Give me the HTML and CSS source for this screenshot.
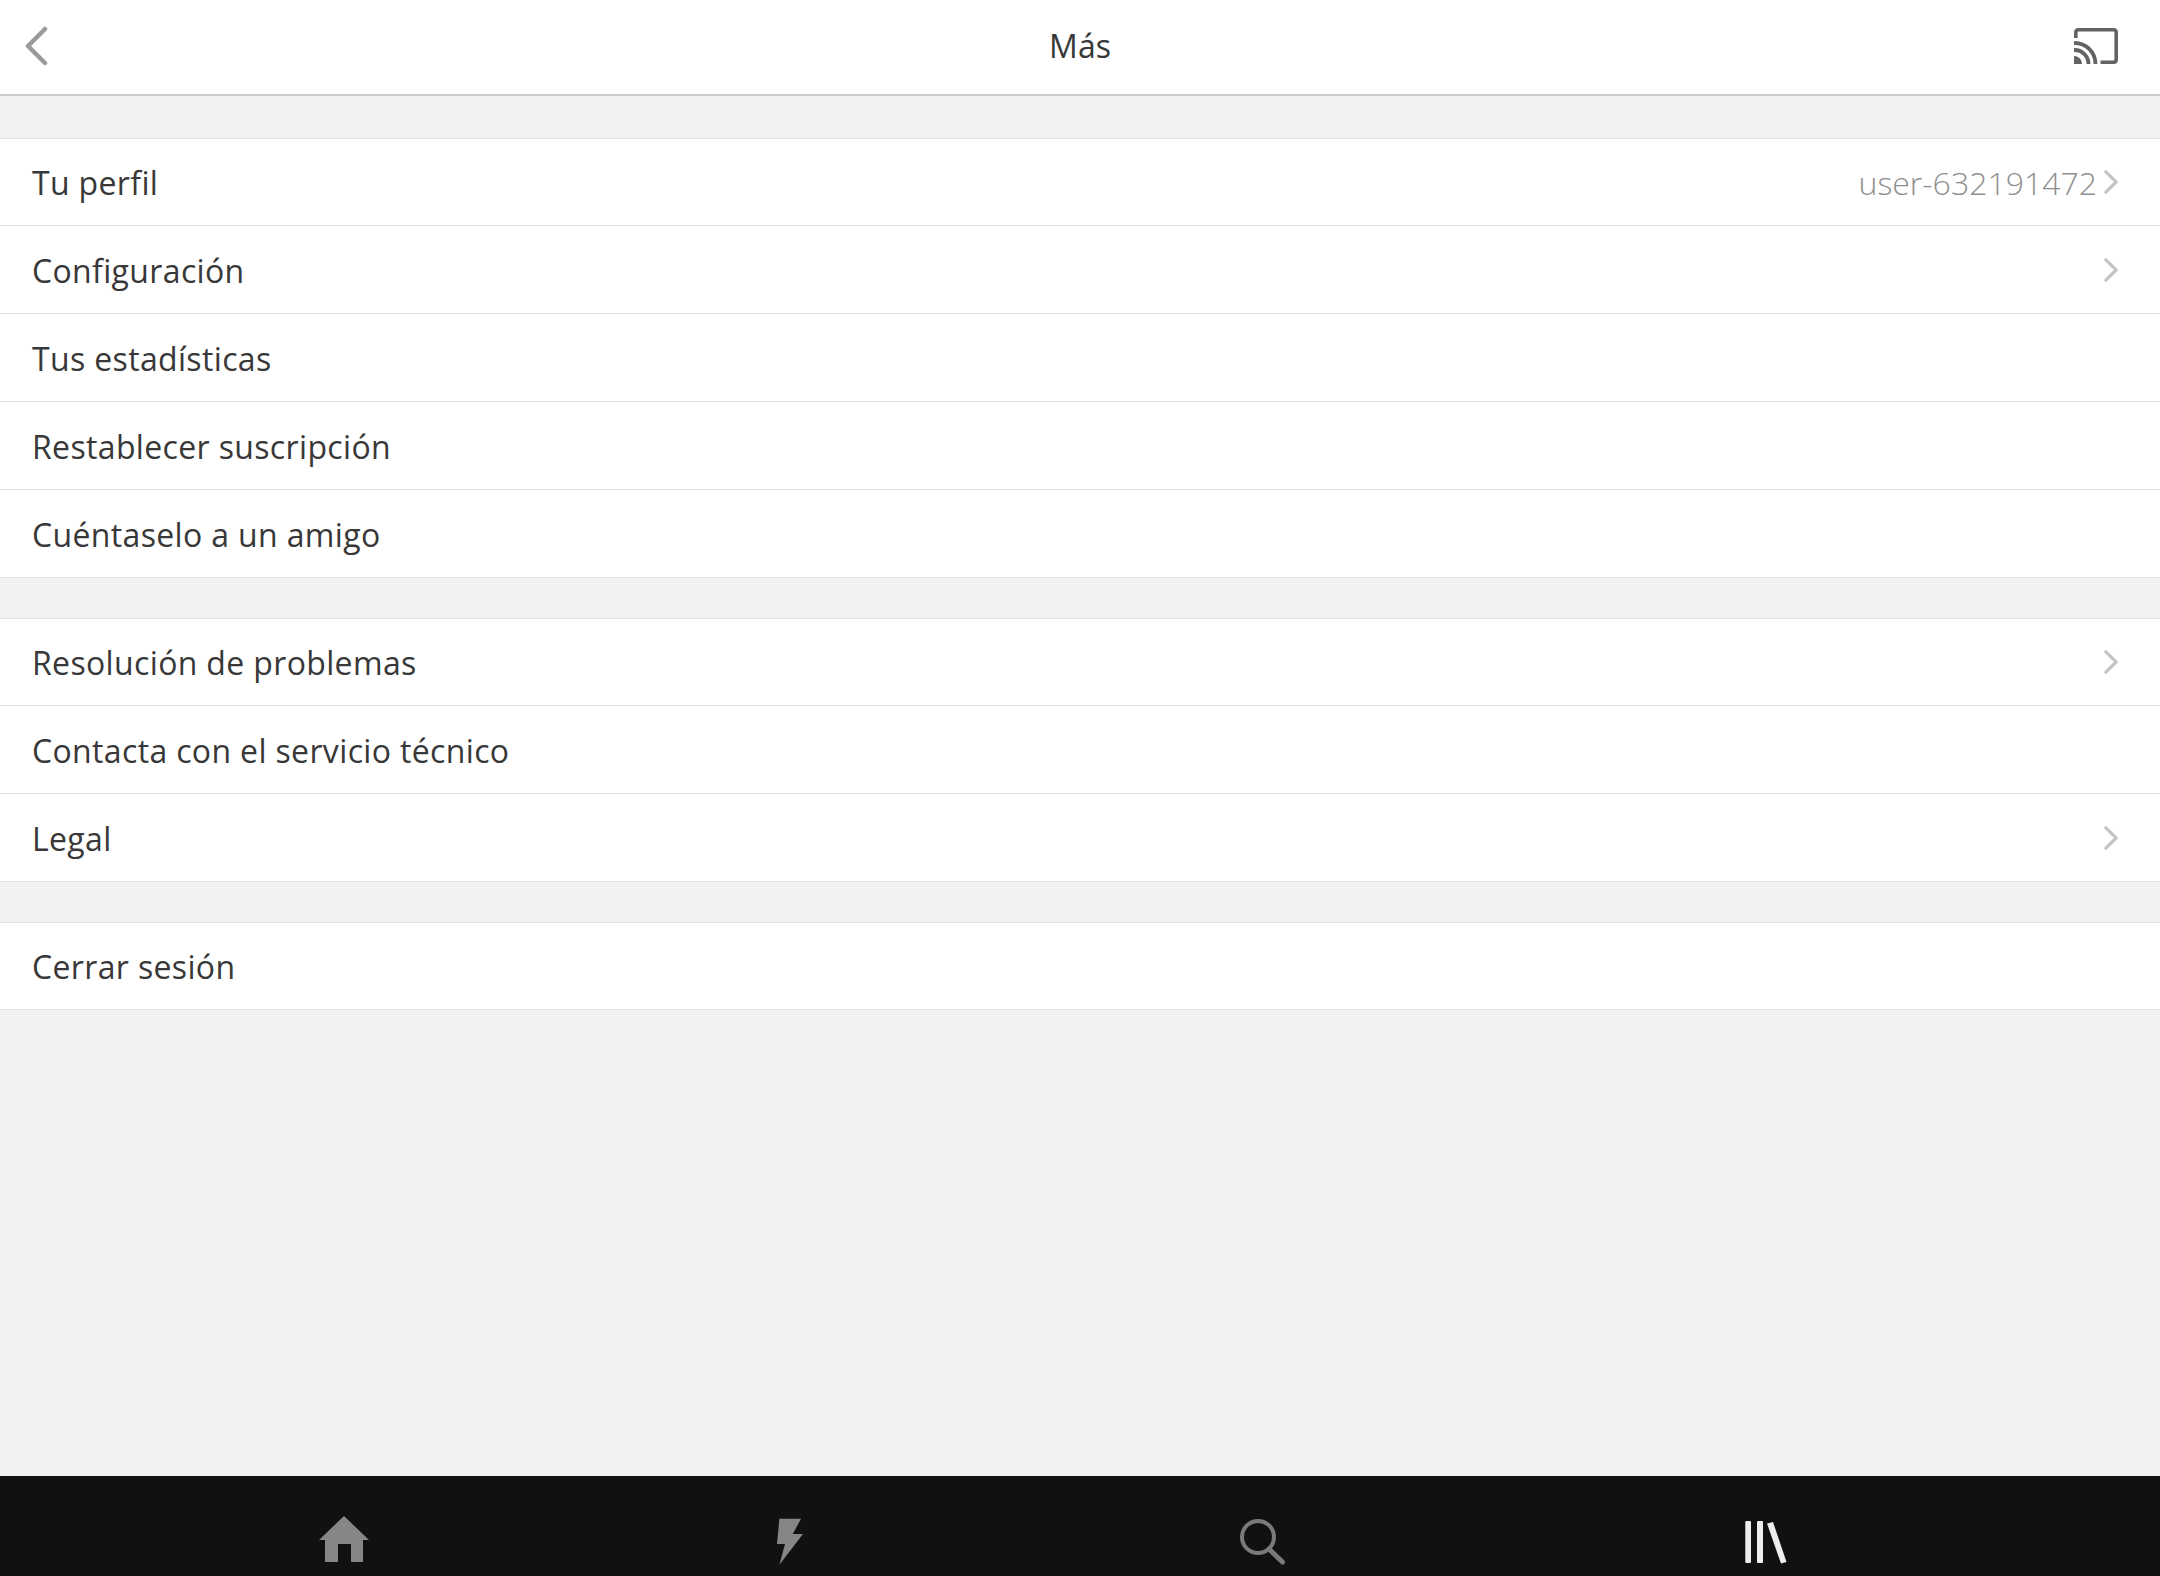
FILE: index.html
```html
<!DOCTYPE html>
<html lang="es">
<head>
<meta charset="utf-8">
<title>Más</title>
<link rel="stylesheet" href="styles.css">
</head>
<body>
<div class="app">
  <header class="topbar">
    <svg class="back" viewBox="0 0 24 40" width="24" height="40"><path d="M21 3 L4 20 L21 37" fill="none" stroke="#9b9b9b" stroke-width="4.5" stroke-linecap="round" stroke-linejoin="round"/></svg>
    <h1 class="title">Más</h1>
    <svg class="cast" viewBox="0 0 44 36" width="44" height="36"><path d="M1.8 10 V4.500 Q1.8 1.800 4.500 1.800 H39.500 Q42.200 1.800 42.200 4.500 V31.500 Q42.200 34.200 39.500 34.200 H26.500" fill="none" stroke="#636363" stroke-width="3.6"/><path d="M0 15 A21 21 0 0 1 21.500 36" fill="none" stroke="#636363" stroke-width="3.8"/><path d="M0 22 A14 14 0 0 1 14.500 36" fill="none" stroke="#636363" stroke-width="3.8"/><path d="M0 28 A8 8 0 0 1 8 36 H0 Z" fill="#636363"/></svg>
  </header>
  <main class="content">
    <section class="group">
      <div class="row"><span class="label">Tu perfil</span><span class="value">user-632191472</span><svg class="chev" viewBox="0 0 14 24" width="14" height="24"><path d="M1.800 1.800 L12.200 12 L1.800 22.200" fill="none" stroke="#c4c4c4" stroke-width="3.2" stroke-linecap="round" stroke-linejoin="round"/></svg></div>
      <div class="row"><span class="label">Configuración</span><svg class="chev" viewBox="0 0 14 24" width="14" height="24"><path d="M1.800 1.800 L12.200 12 L1.800 22.200" fill="none" stroke="#c4c4c4" stroke-width="3.2" stroke-linecap="round" stroke-linejoin="round"/></svg></div>
      <div class="row"><span class="label">Tus estadísticas</span></div>
      <div class="row"><span class="label">Restablecer suscripción</span></div>
      <div class="row"><span class="label">Cuéntaselo a un amigo</span></div>
    </section>
    <section class="group">
      <div class="row"><span class="label">Resolución de problemas</span><svg class="chev" viewBox="0 0 14 24" width="14" height="24"><path d="M1.800 1.800 L12.200 12 L1.800 22.200" fill="none" stroke="#c4c4c4" stroke-width="3.2" stroke-linecap="round" stroke-linejoin="round"/></svg></div>
      <div class="row"><span class="label">Contacta con el servicio técnico</span></div>
      <div class="row"><span class="label">Legal</span><svg class="chev" viewBox="0 0 14 24" width="14" height="24"><path d="M1.800 1.800 L12.200 12 L1.800 22.200" fill="none" stroke="#c4c4c4" stroke-width="3.2" stroke-linecap="round" stroke-linejoin="round"/></svg></div>
    </section>
    <section class="group">
      <div class="row"><span class="label">Cerrar sesión</span></div>
    </section>
  </main>
  <nav class="tabbar">
    <svg viewBox="0 0 50 50" width="50" height="50"><path d="M25 0 L50 24 H44 V46 H32 V28 H19 V46 H6 V24 H0 Z" fill="#868686"/></svg>
    <svg viewBox="0 0 50 50" width="50" height="50"><path d="M16.400 2.700 H38 L29.800 18 H40 L16.400 48.700 L22 28 H14 Z" fill="#868686"/></svg>
    <svg viewBox="0 0 50 50" width="50" height="50"><circle cx="21" cy="21" r="16" fill="none" stroke="#7a7a7a" stroke-width="4"/><path d="M32 33 L45.500 46" fill="none" stroke="#7a7a7a" stroke-width="5" stroke-linecap="round"/></svg>
    <svg viewBox="0 0 50 50" width="50" height="50"><rect x="5.300" y="5" width="5.700" height="42" rx="1" fill="#eeeeee"/><rect x="17" y="5" width="6" height="42" rx="1" fill="#eeeeee"/><path d="M27 7.500 L33 6 L46.500 46 L41 47.500 Z" fill="#eeeeee"/></svg>
  </nav>
</div>
</body>
</html>
```
FILE: styles.css
```css
* { box-sizing: border-box; }
html, body { margin: 0; padding: 0; }
body { background: #f1f1f1; font-family: "Open Sans", "Liberation Sans", sans-serif; color: #383838; }
.app { width: 2160px; height: 1576px; display: flex; flex-direction: column; overflow: hidden; }
.topbar { height: 96px; flex: none; background: #fff; border-bottom: 2px solid #cccccc; display: flex; align-items: center; justify-content: space-between; padding: 0 42px 2px 24px; position: relative; }
.title { position: absolute; left: 0; right: 0; top: 26px; margin: 0; text-align: center; font-size: 32px; line-height: 40px; font-weight: 400; color: #383838; }
.content { flex: 1; display: flex; flex-direction: column; gap: 40px; padding-top: 42px; }
.group { background: #fff; box-shadow: inset 0 1px 0 #e3e3e3; }
.row { height: 88px; padding: 0 42px 0 32px; display: flex; align-items: center; font-size: 32px; border-bottom: 1px solid #e3e3e3; }
.label { flex: 1; letter-spacing: 0.35px; padding-top: 2px; }
.value { color: #8f8f8f; margin-right: 7px; font-weight: 300; padding-top: 2px; }
.chev { flex: none; }
.tabbar { height: 100px; flex: none; background: #111111; display: grid; grid-template-columns: 444px 474px 503px 50px; align-items: start; padding: 40px 0 0 319px; }
```
